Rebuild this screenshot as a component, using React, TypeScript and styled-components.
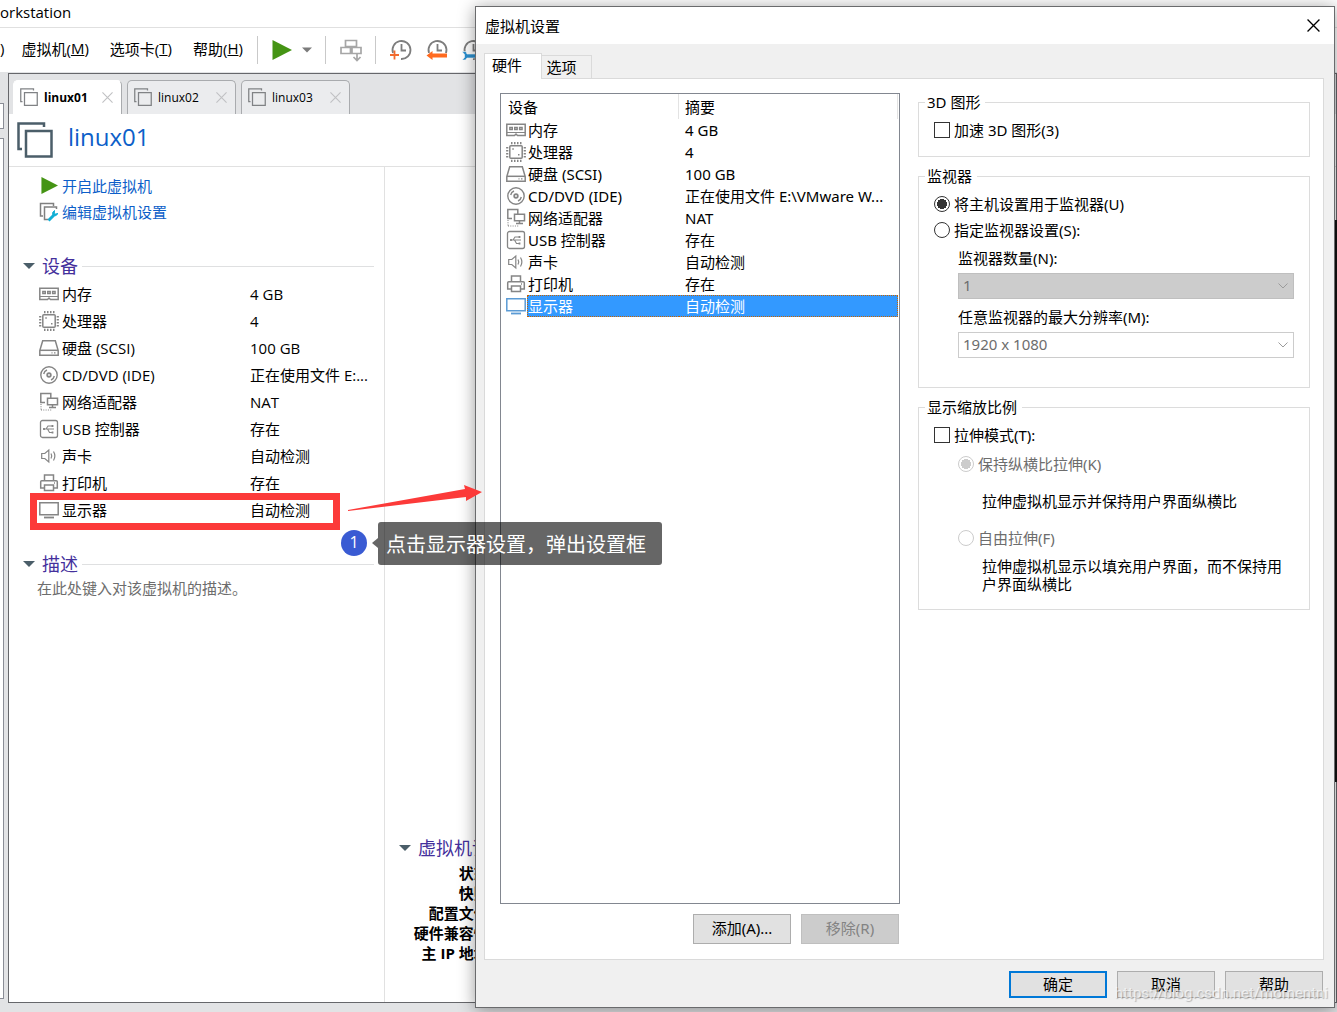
import React from "react";
import styled, { createGlobalStyle, css } from "styled-components";

const uiFont = `"Open Sans", "Noto Sans CJK SC", sans-serif`;
const dialogFont = `"Noto Sans", "Noto Sans CJK SC", sans-serif`;

const GlobalStyle = createGlobalStyle`
  *, *::before, *::after { box-sizing: border-box; }
  body { margin: 0; overflow: hidden; font-family: ${uiFont}; font-size: 15px; color: #000; }
  button, select, input { font: inherit; color: inherit; }
  h1, h2, p { margin: 0; font-weight: 400; }
`;

/* ---------- icons ---------- */

type DeviceIcon = "memory" | "cpu" | "disk" | "disc" | "network" | "usb" | "sound" | "printer" | "display";

const IconSvg = styled.svg`
  display: block;
  flex: none;
`;

const drawings: Record<DeviceIcon, React.ReactNode> = {
  memory: (
    <>
      <path d="M.8 4.300h18.400v11.200H11.500l-1.500-1.500-1.500 1.500H.8z" />
      <path d="M3.800 7.500h2.500v2h-2.500zM8.700 7.500h2.500v2h-2.500zM13.600 7.500h2.500v2h-2.500z" strokeWidth="1.400" />
      <path d="M1 12.500h18" strokeWidth="1" />
    </>
  ),
  cpu: (
    <>
      <rect x="3.800" y="3.800" width="12.400" height="12.400" rx="1" />
      <path d="M5 1.200h11M5 18.800h11" strokeWidth="2.200" strokeDasharray="1.500 1.500" />
      <path d="M1.200 5v11M18.800 5v11" strokeWidth="2.200" strokeDasharray="1.500 1.500" />
      <path d="M6.300 7h1.500M12 12.800h1.500" />
    </>
  ),
  disk: (
    <>
      <path d="M3.700 2.800h12.600l2.900 9.700v4.700H.8v-4.700z" />
      <path d="M1 12.300h18" />
      <path d="M12.500 14.800h1M15 14.800h1.500" strokeWidth="1.300" />
    </>
  ),
  disc: (
    <>
      <circle cx="10" cy="10" r="8.200" strokeWidth="1.400" />
      <circle cx="10" cy="10" r="1.800" strokeWidth="1.800" />
      <path d="M4.700 9A5.500 5.500 0 0 1 8 5M15.300 11a5.500 5.500 0 0 1-3.300 4" strokeWidth="1.400" />
    </>
  ),
  network: (
    <>
      <path d="M6 10.500H1.800v-9h10V6" />
      <path d="M8.500 6.300h10v6.500h-10zM13.500 13v3M10 15.500h7" />
      <path d="M2 12v6M2 18h11" strokeWidth="1.100" strokeDasharray="1 1.300" />
    </>
  ),
  usb: (
    <>
      <rect x="1.500" y="1.500" width="17" height="17" rx="2" strokeWidth="1.300" />
      <path d="M4.500 10h10.500M7 10l2-3h4M8.500 10l2 3.500h3" strokeWidth="1.100" />
      <path d="M5 9v2M13.500 6v2M13.500 12.500v2" strokeWidth="1.800" />
    </>
  ),
  sound: (
    <>
      <path d="M2.700 7.500h3.100l4-3.500v12l-4-3.500H2.700z" strokeWidth="1.200" />
      <path d="M12 7.500q1.500 2.500 0 5M14.500 5.500q2.700 4.500 0 9" strokeWidth="1.200" />
    </>
  ),
  printer: (
    <>
      <path d="M5.500 7.500v-5.500h9v5.500M5 15H1.700V8.700q0-1 1-1h14.600q1 0 1 1V15H15" />
      <path d="M5.500 12h9v5.500h-9zM15 10h1" />
    </>
  ),
  display: (
    <>
      <path d="M.8 2.800h18.400v12H.8z" />
      <path d="M5 17.500h10" strokeWidth="1.800" />
    </>
  ),
};

function Device({ name, active = false }: { name: DeviceIcon; active?: boolean }) {
  return (
    <IconSvg width="20" height="20" viewBox="0 0 20 20" fill={active ? "#fff" : "none"} stroke={active ? "#5b9bd5" : "#858585"} strokeWidth="1.500" aria-hidden>
      {drawings[name]}
    </IconSvg>
  );
}

function Windows({ size, color, weight }: { size: number; color: string; weight: number }) {
  return (
    <IconSvg width={size} height={size} viewBox="0 0 36 36" fill="none" stroke={color} strokeWidth={weight} aria-hidden>
      <path d="M5 27H1.500V1.500H27V5" />
      <path d="M9 9h25.500v25.500H9z" />
    </IconSvg>
  );
}

function Play({ size }: { size: number }) {
  return (
    <IconSvg width={size} height={size} viewBox="0 0 20 20" aria-hidden>
      <path d="M.5 0 20 10 .5 20z" fill="#459414" />
    </IconSvg>
  );
}

function Settings() {
  return (
    <IconSvg width="20" height="20" viewBox="0 0 20 20" fill="none" stroke="#808080" strokeWidth="1.500" aria-hidden>
      <path d="M4 14H1.500V1.500h13V4M9 17.500H5.500V5h12v2" />
      <path d="m9.500 18.500 6-6" stroke="#12afd5" strokeWidth="3" />
      <path d="M15.500 8.500q-3 2-1.500 4.500 3 2 5-1.500l-2.500.5-1.200-1z" fill="#12afd5" stroke="#12afd5" strokeWidth="1" />
    </IconSvg>
  );
}

function Caret({ width, color = "#4b5e69" }: { width: number; color?: string }) {
  return (
    <IconSvg width={width} height="6" viewBox="0 0 12 6" aria-hidden>
      <path d="M0 0h12L6 6z" fill={color} />
    </IconSvg>
  );
}

function SendKeys() {
  return (
    <IconSvg width="22" height="23" viewBox="0 0 22 23" fill="none" stroke="#a6a6a6" strokeWidth="1.700" aria-hidden>
      <path d="M5.500 1.500h11v6h-11zM1 8.500h9.500v6H1zM12 8.500h9v6h-9z" />
      <path d="M17 14v7M13.500 18l3.500 3.500 3.500-3.500" />
    </IconSvg>
  );
}

function Clock({ kind }: { kind: "add" | "revert" | "manage" }) {
  return (
    <IconSvg width="22" height="22" viewBox="0 0 22 22" fill="none" stroke="#7d7d7d" strokeWidth="1.800" aria-hidden>
      <path d="M3 14A9 9 0 1 1 11 20" />
      <path d="M11.500 5v6.500H16" />
      {kind === "add" && <path d="M0 16h9M4.500 11.500v9" stroke="#f26a2e" />}
      {kind === "revert" && (
        <>
          <path d="M0 14h22v8H0z" fill="#fff" stroke="none" />
          <path d="m.5 16.500 6-4.500v2.500H21v4H6.500V21z" fill="#ff6a1f" stroke="none" />
        </>
      )}
      {kind === "manage" && <path d="M0 12.500h4l1 2.500h16v4H5l-1.500 2H0l2.500-2.500v-3z" fill="#2b90d0" stroke="#fff" strokeWidth=".6" />}
    </IconSvg>
  );
}

function Cross({ size, color }: { size: number; color: string }) {
  return (
    <IconSvg width={size} height={size} viewBox="0 0 12 12" stroke={color} strokeWidth="1.200" aria-hidden>
      <path d="m.5.5 11 11m0-11-11 11" />
    </IconSvg>
  );
}

/* ---------- main window ---------- */

const Desktop = styled.div`
  position: relative;
  height: 100vh;
  overflow: hidden;
  display: flex;
  flex-direction: column;
  background: #e2e3e5;
`;

const TitleBar = styled.header`
  flex: none;
  height: 28px;
  line-height: 25px;
  background: #fff;
  border-bottom: 1px solid #e0e0e0;
`;

const MenuBar = styled.div`
  flex: none;
  height: 44px;
  display: flex;
  align-items: center;
  background: #fff;
`;

const Menus = styled.nav`
  width: 257px;
  padding-bottom: 4px;
  display: flex;
  gap: 21px;
  white-space: nowrap;
`;

const PlainButton = styled.button`
  display: flex;
  align-items: center;
  padding: 0;
  border: 0;
  background: none;
  white-space: pre;
`;

const MenuButton = styled(PlainButton)`
  &:first-child { margin-right: -4px; }
`;

const ToolGroup = styled.div<{ $gap?: number }>`
  height: 28px;
  display: flex;
  align-items: center;
  gap: ${(p) => p.$gap ?? 14}px;
  padding: 0 13px 0 14px;
  border-left: 1px solid #c9c9c9;
`;

const Workspace = styled.div`
  flex: 1;
  min-height: 0;
  display: flex;
  padding: 1px 0 9px;
`;

const Sidebar = styled.aside`
  width: 8px;
  display: flex;
  flex-direction: column;
  gap: 9px;
  padding: 30px 4px 4px 0;
`;

const SidePane = styled.div<{ $grow?: boolean }>`
  border: solid #8a8d96;
  border-width: 1px 1px 1px 0;
  background: #fff;
  ${(p) => (p.$grow ? css`flex: 1;` : css`height: 26px;`)}
`;

const VmPanel = styled.main`
  flex: 1;
  display: flex;
  flex-direction: column;
  background: #fff;
  border: 1px solid #66676b;
`;

const VmTabs = styled.div`
  height: 40px;
  display: flex;
  align-items: flex-end;
  gap: 5px;
  padding-left: 4px;
  background: #e2e3e5;
`;

const VmTab = styled.div<{ $active?: boolean }>`
  width: 109px;
  height: 34px;
  display: flex;
  align-items: center;
  padding: 0 8px 1px 6px;
  border: 1px solid ${(p) => (p.$active ? "#fff" : "#a9abae")};
  border-right-color: #a9abae;
  border-bottom: 0;
  border-radius: 5px 5px 0 0;
  background: ${(p) => (p.$active ? "#fff" : "#ebecee")};
  font-size: 12px;
  font-weight: ${(p) => (p.$active ? 700 : 400)};
`;

const TabName = styled.button`
  flex: 1;
  padding: 0 0 0 6px;
  border: 0;
  background: none;
  text-align: left;
`;

const VmHeader = styled.div`
  height: 53px;
  display: flex;
  align-items: center;
  gap: 15px;
  padding: 0 8px;
  border-bottom: 1px solid #e1e1e1;
`;

const VmName = styled.h1`
  font-size: 24px;
  line-height: 40px;
  padding-bottom: 6px;
  color: #0d5fc9;
`;

const VmBody = styled.div`
  flex: 1;
  display: flex;
`;

const Summary = styled.section`
  width: 376px;
  padding: 6px 10px 0 14px;
  border-right: 1px solid #e1e1e1;
`;

const TaskLink = styled.a`
  height: 26px;
  display: flex;
  align-items: center;
  gap: 3px;
  padding: 0 0 1px 16px;
  color: #0d5fc9;
  text-decoration: none;
`;

const IconSlot = styled.span`
  width: 20px;
  display: flex;
  justify-content: center;
`;

const SectionTitle = styled.h2<{ $spaced?: boolean }>`
  height: 30px;
  margin-top: ${(p) => (p.$spaced ? 26 : 0)}px;
  display: flex;
  align-items: center;
  gap: 7px;
  font-size: 18px;
  line-height: 30px;
  color: #44309c;
  white-space: nowrap;
`;

const Rule = styled.span`
  flex: 1;
  height: 1px;
  margin-left: -3px;
  background: #dfe0e1;
`;

const DeviceTable = styled.table`
  width: 100%;
  margin-bottom: -1px;
  table-layout: fixed;
  border-collapse: collapse;
  white-space: nowrap;

  td { height: 27px; padding: 0 0 2px; line-height: 20px; }
  td:first-child { width: 39px; padding-left: 16px; }
  td:nth-child(2) { width: 188px; }
`;

const Description = styled.p`
  padding-left: 14px;
  line-height: 19px;
  color: #6d6d6d;
`;

const Details = styled.section`
  flex: 1;
  display: flex;
  flex-direction: column;
  justify-content: flex-end;
  padding: 0 14px 39px;
`;

const DetailList = styled.dl`
  width: 94px;
  margin: 0;
  text-align: right;
  font-weight: 700;
  line-height: 20px;
  white-space: nowrap;
`;

/* ---------- settings dialog ---------- */

const Dialog = styled.section`
  position: absolute;
  inset: 6px 2px 4px 475px;
  display: flex;
  flex-direction: column;
  border: 1px solid #6a6b6d;
  background: #f0f0f0;
  box-shadow: 0 2px 16px rgba(0, 0, 0, 0.4);
  font-family: ${dialogFont};
`;

const DialogTitle = styled.header`
  flex: none;
  height: 37px;
  display: flex;
  align-items: center;
  justify-content: space-between;
  padding: 0 14px 1px 9px;
  background: #fff;
`;

const DialogTabs = styled.div`
  flex: none;
  height: 34px;
  display: flex;
  align-items: flex-end;
  padding: 0 8px;
`;

const DialogTab = styled.button<{ $active?: boolean }>`
  position: relative;
  border: 1px solid #dadada;
  border-bottom: 0;
  padding: 0;
  ${(p) =>
    p.$active
      ? css`
          z-index: 1;
          width: 58px;
          height: 26px;
          margin-bottom: -1px;
          padding: 0 12px 4px 0;
          background: #fff;
        `
      : css`
          width: 50px;
          height: 23px;
          padding: 0 10px 2px 0;
          border-left: 0;
          background: #f0f0f0;
        `}
`;

const Page = styled.div`
  flex: 1;
  min-height: 0;
  display: flex;
  gap: 18px;
  margin: 0 10px 0 8px;
  padding: 14px 13px 15px 15px;
  border: 1px solid #dadada;
  background: #fff;
`;

const HardwareColumn = styled.div`
  width: 400px;
  display: flex;
  flex-direction: column;
`;

const HardwareBox = styled.div`
  flex: 1;
  padding-right: 1px;
  border: 1px solid #828790;
`;

const HardwareTable = styled.table`
  width: 100%;
  table-layout: fixed;
  border-collapse: separate;
  border-spacing: 0;
  white-space: nowrap;

  th {
    height: 25px;
    padding: 0 0 0 7px;
    text-align: left;
    font-weight: 400;
    line-height: 20px;
    border-right: 1px solid #e3e3e3;
  }
  th + th { padding-left: 6px; }
`;

const HardwareRow = styled.tr<{ $selected?: boolean }>`
  td { height: 22px; padding: 0; line-height: 20px; border: 0 dotted #c86400; }
  td:first-child { padding-left: 5px; }
  td:nth-child(2) { padding-left: 1px; }
  td:nth-child(3) { padding-left: 6px; }
  ${(p) =>
    p.$selected &&
    css`
      color: #fff;
      td + td { background: #3399ff; border-width: 1px 0; }
      td:nth-child(2) { border-left-width: 1px; padding-left: 0; }
      td:nth-child(3) { border-right-width: 1px; }
    `}
`;

const Buttons = styled.div<{ $footer?: boolean }>`
  display: flex;
  justify-content: flex-end;
  gap: 10px;
  ${(p) => (p.$footer ? css`padding: 11px 11px 9px;` : css`padding: 10px 1px 0;`)}
`;

const PushButton = styled.button<{ $tall?: boolean; $primary?: boolean }>`
  width: 98px;
  height: ${(p) => (p.$tall ? 30 : 27)}px;
  padding: 0 0 2px;
  border: ${(p) => (p.$primary ? "2px solid #0078d7" : "1px solid #adadad")};
  background: #e1e1e1;
  line-height: 20px;

  &:disabled { border-color: #bfbfbf; background: #cccccc; color: #838383; }
`;

const Options = styled.div`
  flex: 1;
  display: flex;
  flex-direction: column;
  gap: 10px;
`;

const Group = styled.fieldset`
  min-width: 0;
  margin: 0;
  padding: 6px 15px 13px;
  border: 1px solid #dcdcdc;

  legend { height: 18px; margin-left: -9px; padding: 0 5px 0 2px; line-height: 18px; }
`;

const Choice = styled.label<{ $disabled?: boolean }>`
  height: 26px;
  display: flex;
  align-items: center;
  gap: 4px;
  line-height: 20px;
  color: ${(p) => (p.$disabled ? "#6d6d6d" : "#000")};
`;

const Tick = styled.input`
  appearance: none;
  width: 16px;
  height: 16px;
  margin: 0;
  border: 1px solid #333;
  background: #fff;

  &[type="radio"] { border-radius: 50%; }
  &[type="radio"]:checked { background: radial-gradient(circle, #333 0 5px, #fff 5px); }
  &:disabled { border-color: #cccccc; }
  &[type="radio"]:checked:disabled { background: radial-gradient(circle, #ccc 0 5px, #fff 5px); }
`;

const Nested = styled.div<{ $top?: number; $bottom: number }>`
  padding: ${(p) => p.$top ?? 0}px 0 ${(p) => p.$bottom}px 24px;
`;

const FieldLabel = styled.label`
  display: block;
  height: 30px;
  line-height: 30px;
`;

const SelectFrame = styled.div<{ $filled?: boolean }>`
  height: 26px;
  margin-bottom: 3px;
  display: flex;
  align-items: center;
  padding-right: 5px;
  border: 1px solid ${(p) => (p.$filled ? "#bfbfbf" : "#cccccc")};
  background: ${(p) => (p.$filled ? "#cccccc" : "#fff")};
  color: #6d6d6d;
`;

const Select = styled.select`
  appearance: none;
  flex: 1;
  height: 24px;
  padding: 0 0 2px 4px;
  border: 0;
  background: none;
  opacity: 1;
`;

const Hint = styled.p<{ $top: number; $bottom: number }>`
  padding-left: 24px;
  margin: ${(p) => p.$top}px 0 ${(p) => p.$bottom}px;
  line-height: 18px;
`;

/* ---------- annotations ---------- */

const Highlight = styled.div`
  position: absolute;
  left: 30px;
  top: 493px;
  width: 310px;
  height: 37px;
  border: 7px solid #fc3a39;
`;

const Arrow = styled.svg`
  position: absolute;
  left: 347px;
  top: 484px;
`;

const Step = styled.div`
  position: absolute;
  left: 341px;
  top: 530px;
  width: 26px;
  height: 26px;
  border-radius: 50%;
  background: #3a5bd3;
  color: #fff;
  font-size: 16px;
  text-align: center;
  line-height: 24px;
`;

const Callout = styled.div`
  position: absolute;
  left: 378px;
  top: 522px;
  height: 43px;
  padding: 1px 16px 0 8px;
  border-radius: 3px;
  background: rgba(0, 0, 0, 0.6);
  color: #fff;
  font-size: 20px;
  line-height: 44px;
  white-space: nowrap;

  &::before {
    content: "";
    position: absolute;
    right: 100%;
    top: 16px;
    border: solid transparent;
    border-width: 5px 6px 5px 0;
    border-right-color: rgba(0, 0, 0, 0.6);
  }
`;

const EdgeStrip = styled.div`
  position: absolute;
  right: 0;
  top: 220px;
  bottom: 230px;
  width: 6px;
  background: #111;
`;

const Watermark = styled.div`
  position: absolute;
  right: 9px;
  bottom: 8px;
  font-family: Roboto, sans-serif;
  font-size: 15px;
  line-height: 22px;
  color: rgba(255, 255, 255, 0.65);
  text-shadow: 1px 1px 1px rgba(0, 0, 0, 0.25);
`;

const devices: { icon: DeviceIcon; name: string; value: string; full?: string }[] = [
  { icon: "memory", name: "内存", value: "4 GB" },
  { icon: "cpu", name: "处理器", value: "4" },
  { icon: "disk", name: "硬盘 (SCSI)", value: "100 GB" },
  { icon: "disc", name: "CD/DVD (IDE)", value: "正在使用文件 E:...", full: "正在使用文件 E:\\VMware W..." },
  { icon: "network", name: "网络适配器", value: "NAT" },
  { icon: "usb", name: "USB 控制器", value: "存在" },
  { icon: "sound", name: "声卡", value: "自动检测" },
  { icon: "printer", name: "打印机", value: "存在" },
  { icon: "display", name: "显示器", value: "自动检测" },
];

const menus = [
  ["虚拟机", "M"],
  ["选项卡", "T"],
  ["帮助", "H"],
];

function Chevron() {
  return (
    <IconSvg width="10" height="6" viewBox="0 0 10 6" fill="none" stroke="#9b9b9b" aria-hidden>
      <path d="m.5.5 4.500 4.500L9.500.5" />
    </IconSvg>
  );
}

function MainWindow() {
  return (
    <>
      <TitleBar>orkstation</TitleBar>
      <MenuBar>
        <Menus>
          <MenuButton>)</MenuButton>
          {menus.map(([text, key]) => (
            <MenuButton key={key}>
              {text}(<u>{key}</u>)
            </MenuButton>
          ))}
        </Menus>
        <ToolGroup $gap={10}>
          <PlainButton aria-label="开启"><Play size={20} /></PlainButton>
          <Caret width={10} color="#7b7b7b" />
        </ToolGroup>
        <ToolGroup>
          <PlainButton aria-label="发送"><SendKeys /></PlainButton>
        </ToolGroup>
        <ToolGroup>
          <PlainButton aria-label="拍摄快照"><Clock kind="add" /></PlainButton>
          <PlainButton aria-label="恢复快照"><Clock kind="revert" /></PlainButton>
          <PlainButton aria-label="管理快照"><Clock kind="manage" /></PlainButton>
        </ToolGroup>
      </MenuBar>
      <Workspace>
        <Sidebar>
          <SidePane />
          <SidePane $grow />
        </Sidebar>
        <VmPanel>
          <VmTabs>
            {["linux01", "linux02", "linux03"].map((name, i) => (
              <VmTab key={name} $active={i === 0}>
                <Windows size={18} color="#808285" weight={2.5} />
                <TabName>{name}</TabName>
                <PlainButton aria-label="关闭"><Cross size={11} color="#c0c1c3" /></PlainButton>
              </VmTab>
            ))}
          </VmTabs>
          <VmHeader>
            <Windows size={36} color="#4b5e69" weight={2.5} />
            <VmName>linux01</VmName>
          </VmHeader>
          <VmBody>
            <Summary>
              <TaskLink href="#start"><IconSlot><Play size={17} /></IconSlot>开启此虚拟机</TaskLink>
              <TaskLink href="#edit"><IconSlot><Settings /></IconSlot>编辑虚拟机设置</TaskLink>
              <SectionTitle $spaced><Caret width={12} />设备<Rule /></SectionTitle>
              <DeviceTable>
                <tbody>
                  {devices.map((d) => (
                    <tr key={d.name}>
                      <td><Device name={d.icon} /></td>
                      <td>{d.name}</td>
                      <td>{d.value}</td>
                    </tr>
                  ))}
                </tbody>
              </DeviceTable>
              <SectionTitle $spaced><Caret width={12} />描述<Rule /></SectionTitle>
              <Description>在此处键入对该虚拟机的描述。</Description>
            </Summary>
            <Details>
              <SectionTitle><Caret width={12} />虚拟机详细信息</SectionTitle>
              <DetailList>
                {["状态:", "快照:", "配置文件:", "硬件兼容性:", "主 IP 地址:"].map((t) => (
                  <dt key={t}>{t}</dt>
                ))}
              </DetailList>
            </Details>
          </VmBody>
        </VmPanel>
      </Workspace>
    </>
  );
}

function SettingsDialog() {
  return (
    <Dialog role="dialog" aria-label="虚拟机设置">
      <DialogTitle>
        虚拟机设置
        <PlainButton aria-label="关闭"><Cross size={13} color="#000" /></PlainButton>
      </DialogTitle>
      <DialogTabs>
        <DialogTab $active>硬件</DialogTab>
        <DialogTab>选项</DialogTab>
      </DialogTabs>
      <Page>
        <HardwareColumn>
          <HardwareBox>
            <HardwareTable>
              <colgroup>
                <col style={{ width: 26 }} />
                <col style={{ width: 152 }} />
                <col />
              </colgroup>
              <thead>
                <tr><th colSpan={2}>设备</th><th>摘要</th></tr>
              </thead>
              <tbody>
                {devices.map((d) => (
                  <HardwareRow key={d.name} $selected={d.icon === "display"}>
                    <td><Device name={d.icon} active={d.icon === "display"} /></td>
                    <td>{d.name}</td>
                    <td>{d.full ?? d.value}</td>
                  </HardwareRow>
                ))}
              </tbody>
            </HardwareTable>
          </HardwareBox>
          <Buttons>
            <PushButton $tall>添加(A)...</PushButton>
            <PushButton $tall disabled>移除(R)</PushButton>
          </Buttons>
        </HardwareColumn>
        <Options>
          <Group>
            <legend>3D 图形</legend>
            <Choice><Tick type="checkbox" />加速 3D 图形(3)</Choice>
          </Group>
          <Group>
            <legend>监视器</legend>
            <Choice><Tick type="radio" name="monitor" defaultChecked />将主机设置用于监视器(U)</Choice>
            <Choice><Tick type="radio" name="monitor" />指定监视器设置(S):</Choice>
            <Nested $bottom={13}>
              <FieldLabel htmlFor="count">监视器数量(N):</FieldLabel>
              <SelectFrame $filled><Select id="count" disabled><option>1</option></Select><Chevron /></SelectFrame>
              <FieldLabel htmlFor="resolution">任意监视器的最大分辨率(M):</FieldLabel>
              <SelectFrame><Select id="resolution" disabled><option>1920 x 1080</option></Select><Chevron /></SelectFrame>
            </Nested>
          </Group>
          <Group>
            <legend>显示缩放比例</legend>
            <Choice><Tick type="checkbox" />拉伸模式(T):</Choice>
            <Nested $top={3} $bottom={3}>
              <Choice $disabled><Tick type="radio" name="stretch" disabled defaultChecked />保持纵横比拉伸(K)</Choice>
              <Hint $top={15} $bottom={15}>拉伸虚拟机显示并保持用户界面纵横比</Hint>
              <Choice $disabled><Tick type="radio" name="stretch" disabled />自由拉伸(F)</Choice>
              <Hint $top={6} $bottom={0}>拉伸虚拟机显示以填充用户界面，而不保持用户界面纵横比</Hint>
            </Nested>
          </Group>
        </Options>
      </Page>
      <Buttons $footer>
        <PushButton $primary>确定</PushButton>
        <PushButton>取消</PushButton>
        <PushButton>帮助</PushButton>
      </Buttons>
    </Dialog>
  );
}

export default function App() {
  return (
    <Desktop>
      <GlobalStyle />
      <MainWindow />
      <EdgeStrip />
      <SettingsDialog />
      <Highlight />
      <Arrow width="136" height="30" viewBox="0 0 136 30" aria-hidden>
        <path d="M1 26 118 5 117 1l18 7-16 9v-4L1 27z" fill="#fc3a39" />
      </Arrow>
      <Step>1</Step>
      <Callout>点击显示器设置，弹出设置框</Callout>
      <Watermark>https://blog.csdn.net/momentni</Watermark>
    </Desktop>
  );
}
